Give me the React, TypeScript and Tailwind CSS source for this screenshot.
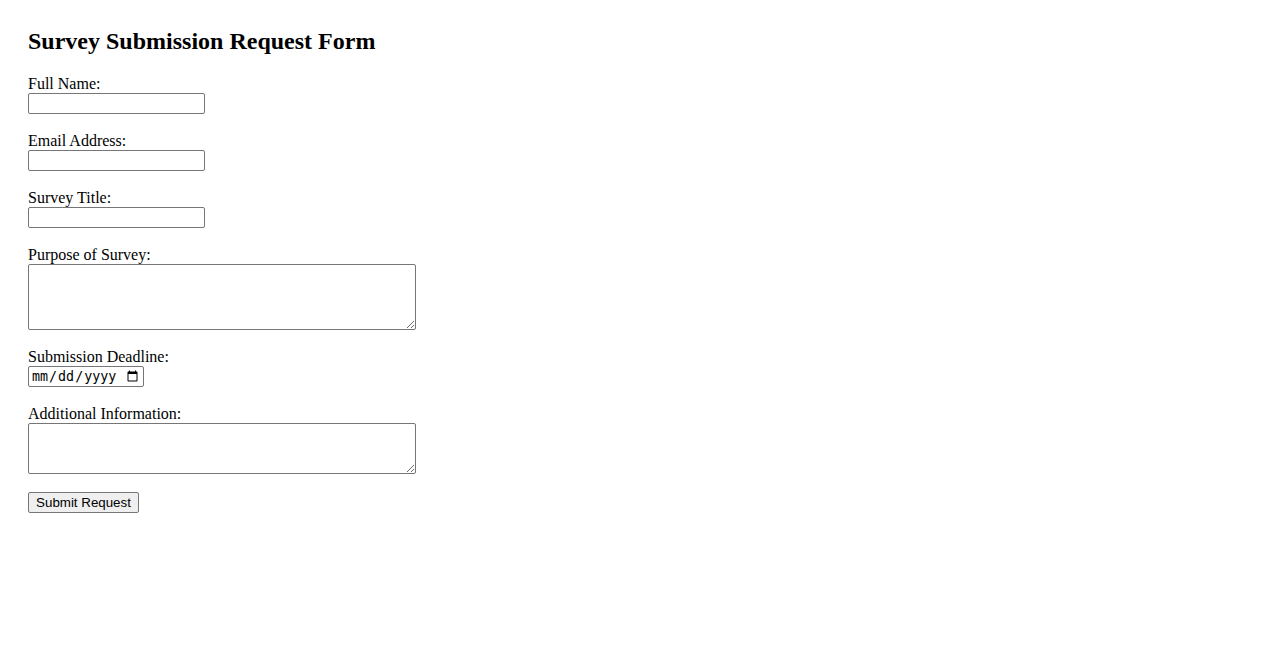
import React from 'react';

const serif = 'font-["Liberation_Serif","Times_New_Roman",serif]';
const field =
  'block bg-white border border-[#767676] rounded-[2px] text-[13.33px] font-["Liberation_Sans",Arial,sans-serif] text-black px-[2px] py-[1px] mb-[18px]';

const Label: React.FC<{ htmlFor: string; children: React.ReactNode }> = ({ htmlFor, children }) => (
  <label htmlFor={htmlFor} className="block text-[16px] leading-[18px] h-[18px] text-black">
    {children}
  </label>
);

const App: React.FC = () => {
  return (
    <div className={`min-h-screen bg-white ${serif} text-black px-[28px] pt-[28px]`}>
      <h2 className="text-[24px] leading-[27px] font-bold mb-[20px]">Survey Submission Request Form</h2>
      <form onSubmit={(e) => e.preventDefault()}>
        <Label htmlFor="name">Full Name:</Label>
        <input id="name" type="text" className={`${field} w-[177px] h-[21px]`} />

        <Label htmlFor="email">Email Address:</Label>
        <input id="email" type="email" className={`${field} w-[177px] h-[21px]`} />

        <Label htmlFor="title">Survey Title:</Label>
        <input id="title" type="text" className={`${field} w-[177px] h-[21px]`} />

        <Label htmlFor="purpose">Purpose of Survey:</Label>
        <textarea id="purpose" className={`${field} w-[388px] h-[66px] resize`} />

        <Label htmlFor="deadline">Submission Deadline:</Label>
        <input
          id="deadline"
          type="date"
          className={`block bg-white border border-[#767676] rounded-[2px] text-[13.33px] font-["DejaVu_Sans_Mono",monospace] text-black px-[2px] py-0 mb-[18px] w-[116px] h-[21px]`}
        />

        <Label htmlFor="info">Additional Information:</Label>
        <textarea id="info" className={`${field} w-[388px] h-[51px] resize`} />

        <button
          type="submit"
          className='block bg-[#efefef] border border-[#767676] rounded-[2px] text-[13.33px] font-["Liberation_Sans",Arial,sans-serif] text-black px-[6px] h-[21px] w-[111px] leading-[17px]'
        >
          Submit Request
        </button>
      </form>
    </div>
  );
};

export default App;
